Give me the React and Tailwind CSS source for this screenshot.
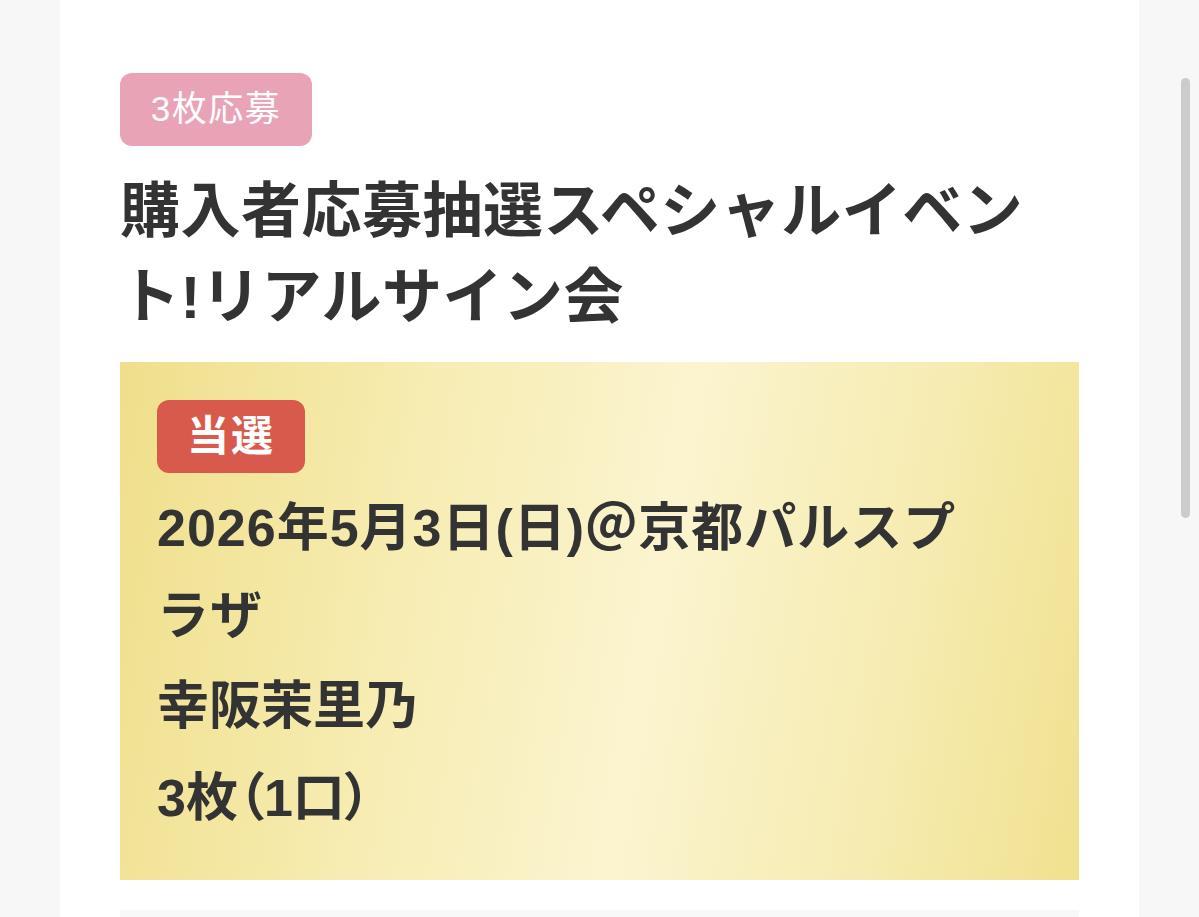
const font = {
  fontFamily: '"Liberation Sans", "Noto Sans CJK JP", sans-serif',
};

function Badge({ children, className }) {
  return (
    <span
      className={`inline-flex items-center justify-center rounded-[12px] text-white ${className}`}
    >
      {children}
    </span>
  );
}

function ResultBox() {
  return (
    <div className="bg-[linear-gradient(100deg,#efdf8b_0%,#f7ecb2_30%,#fbf4cf_55%,#f6ebb0_80%,#f0e18f_100%)] px-[37px] pt-[38px] pb-[38px]">
      <Badge className="h-[73px] w-[148px] bg-[#d75a4d] text-[42px] font-bold tracking-[2px]">
        当選
      </Badge>
      <div className="mt-[11px] flex flex-col gap-[2px] text-[52px] font-bold leading-[88px] text-[#333333]">
        <p className="max-w-[840px] tracking-[1px]">2026年5月3日(日)＠京都パルスプラザ</p>
        <p>幸阪茉里乃</p>
        <p className="mt-[2px] [font-feature-settings:'palt']">3枚（1口）</p>
      </div>
    </div>
  );
}

export default function App() {
  return (
    <div className="relative min-h-[917px] overflow-hidden bg-[#f7f7f7]" style={font}>
      <div className="mx-[60px] min-h-[917px] bg-white px-[60px] pt-[73px]">
        <Badge className="h-[73px] w-[192px] bg-[#e9a3b6] text-[35px] tracking-[1.5px]">
          3枚応募
        </Badge>
        <h1 className="mt-[23px] text-[60px] font-bold leading-[86px] tracking-[0.5px] text-[#333333]">
          購入者応募抽選スペシャルイベント!リアルサイン会
        </h1>
        <div className="mt-[21px]">
          <ResultBox />
        </div>
        <div className="mt-[30px] h-[40px] bg-[#f8f8f8]" />
      </div>

      {/* overlay scrollbar thumb */}
      <div className="absolute right-[9px] top-[78px] h-[440px] w-[9px] rounded-full bg-[#cccccc]" />
    </div>
  );
}
